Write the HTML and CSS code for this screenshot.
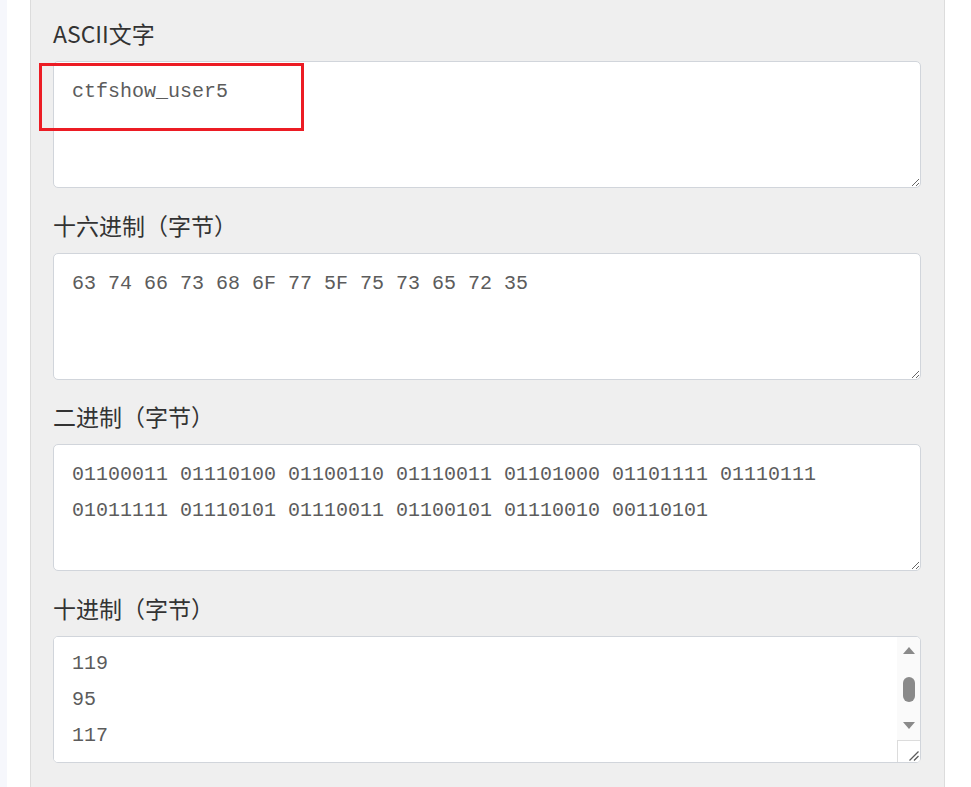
FILE: index.html
```html
<!DOCTYPE html>
<html lang="zh-CN">
<head>
    <meta charset="UTF-8">
    <meta name="viewport" content="width=device-width, initial-scale=1.0">
    <title>ASCII 转换</title>
    <link rel="stylesheet" href="styles.css">
</head>
<body>
    <div class="sidebar-edge"></div>
    <div class="main">
        <div class="panel">
            <!-- ASCII text -->
            <div class="group">
                <label for="ascii">ASCII文字</label>
                <div class="field">
                    <textarea id="ascii" class="code">ctfshow_user5</textarea>
                    <div class="mark"></div>
                </div>
            </div>

            <!-- Hex bytes -->
            <div class="group">
                <label for="hex">十六进制（字节）</label>
                <div class="field">
                    <textarea id="hex" class="code">63 74 66 73 68 6F 77 5F 75 73 65 72 35</textarea>
                </div>
            </div>

            <!-- Binary bytes -->
            <div class="group">
                <label for="bin">二进制（字节）</label>
                <div class="field">
                    <textarea id="bin" class="code">01100011 01110100 01100110 01110011 01101000 01101111 01110111 01011111 01110101 01110011 01100101 01110010 00110101</textarea>
                </div>
            </div>

            <!-- Decimal bytes, one per line -->
            <div class="group">
                <label for="dec">十进制（字节）</label>
                <div class="field scroll-box">
                    <textarea id="dec" class="code">99
116
102
115
104
111
119
95
117
115
101
114
53</textarea>
                    <div class="scrollbar">
                        <span class="arrow-box"><span class="arrow up"></span></span>
                        <span class="thumb"></span>
                        <span class="track"></span>
                        <span class="arrow-box"><span class="arrow down"></span></span>
                        <span class="corner">
                            <svg width="10" height="10" viewBox="0 0 10 10">
                                <path d="M9.5 0.5 L0.5 9.5 M9.5 5 L5 9.5" stroke="#5b5b5b" stroke-width="1.3" fill="none"/>
                            </svg>
                        </span>
                    </div>
                </div>
            </div>
        </div>
    </div>

    <script>
        // keep the decimal list scrolled to the middle bytes
        document.getElementById("dec").scrollTop = 219;
    </script>
</body>
</html>
```

FILE: styles.css
```css
body {
    margin: 0;
    background: #fff;
    font-family: "Noto Sans CJK SC", "Noto Sans", sans-serif;
    color: #333;
    display: flex;
    min-height: 100vh;
}

.sidebar-edge {
    width: 7px;
    background: #f6f7fc;
}

.main {
    padding-left: 23px;
}

.panel {
    width: 915px;
    box-sizing: border-box;
    min-height: 100vh;
    background: #efefef;
    border-left: 1px solid #dcdcdc;
    border-right: 1px solid #dcdcdc;
    padding: 0 23px 30px 22px;
}

.group {
    padding-top: 17px;
}

.group + .group {
    padding-top: 20.67px;
}

label {
    display: block;
    font-size: 23px;
    line-height: 32px;
    height: 36px;
    margin-bottom: 8px;
    color: #333;
}

.field {
    position: relative;
}

.code {
    display: block;
    width: 100%;
    height: 127px;
    box-sizing: border-box;
    margin: 0;
    padding: 12px 17px 8px 18px;
    border: 1px solid #d1d5db;
    border-radius: 5px;
    background: #fff;
    color: #5c5c5c;
    font-family: "Liberation Mono", monospace;
    font-size: 20px;
    line-height: 36px;
    resize: vertical;
    outline: none;
}

/* red highlight around the entered text */
.mark {
    position: absolute;
    left: -14px;
    top: 2px;
    width: 265px;
    height: 68px;
    box-sizing: border-box;
    border: 3px solid #ec1c24;
    pointer-events: none;
}

.scroll-box {
    display: flex;
    height: 127px;
    box-sizing: border-box;
    border: 1px solid #d1d5db;
    border-radius: 5px;
    background: #fff;
    overflow: hidden;
}

.scroll-box .code {
    flex: 1;
    height: 125px;
    border: none;
    border-radius: 0;
    overflow: hidden;
    resize: none;
}

.scrollbar {
    width: 23px;
    display: flex;
    flex-direction: column;
    align-items: center;
    background: #fafafa;
}

.arrow-box {
    height: 28px;
    width: 100%;
    display: flex;
    align-items: center;
    justify-content: center;
}

.arrow {
    width: 0;
    height: 0;
    border-left: 6px solid transparent;
    border-right: 6px solid transparent;
}

.arrow.up {
    border-bottom: 7px solid #8a8a8a;
}

.arrow.down {
    border-top: 7px solid #8a8a8a;
}

.thumb {
    margin-top: 12px;
    width: 12px;
    height: 25px;
    border-radius: 6px;
    background: #8a8a8a;
}

.track {
    flex: 1;
}

.corner {
    width: 100%;
    height: 22px;
    box-sizing: border-box;
    border-top: 1px solid #dcdcdc;
    border-left: 1px solid #dcdcdc;
    background: #fff;
    display: flex;
    align-items: flex-end;
    justify-content: flex-end;
    padding: 0 1px 1px 0;
}
```
